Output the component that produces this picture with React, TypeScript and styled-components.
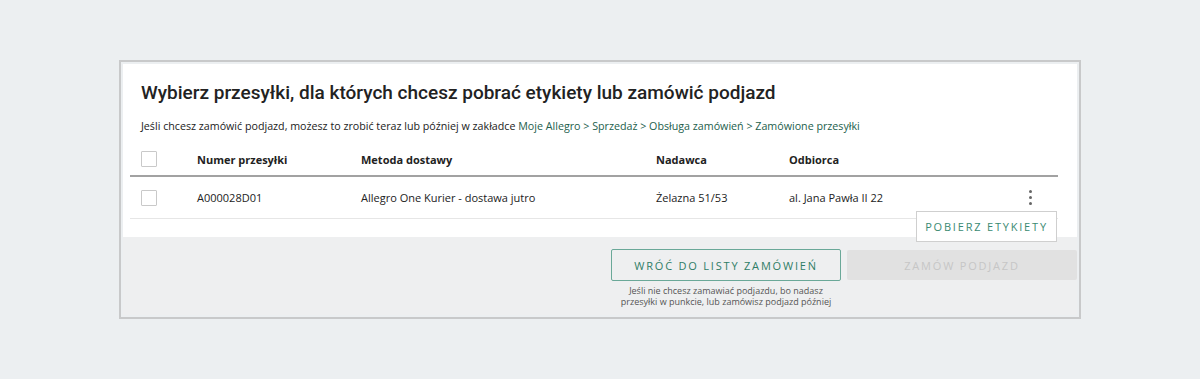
import styled, { createGlobalStyle } from "styled-components";

const GlobalStyle = createGlobalStyle`
  html, body {
    margin: 0;
    padding: 0;
    background: #eceff1;
  }
  * {
    box-sizing: border-box;
  }
`;

const Page = styled.div`
  width: 1200px;
  height: 379px;
  padding-top: 60px;
  background: #eceff1;
  font-family: "Open Sans", "Liberation Sans", sans-serif;
  color: #222;
`;

const Card = styled.div`
  width: 962px;
  margin-left: 119px;
  border: 2px solid #c8c9ca;
  padding: 2px;
  background: #eceff1;
`;

const Main = styled.div`
  background: #fff;
  padding: 17px 19px 18px 7px;
`;

const Title = styled.h2`
  margin: 0 0 0 11px;
  font-family: Roboto, "Liberation Sans", sans-serif;
  font-weight: 500;
  font-size: 19px;
  line-height: 24px;
  color: #222;
`;

const Info = styled.p`
  margin: 13px 0 0 11px;
  font-size: 10.7px;
  line-height: 16px;
  color: #222;
  & a {
    color: #23604c;
    text-decoration: none;
  }
`;

const Table = styled.div`
  margin-top: 9px;
`;

const Row = styled.div<{ $head?: boolean }>`
  display: grid;
  grid-template-columns: 56px 164px 295px 133px 1fr 48px;
  align-items: center;
  height: ${(p) => (p.$head ? "34px" : "42px")};
  border-bottom: ${(p) => (p.$head ? "2px solid #a2a2a2" : "1px solid #e6e6e6")};
  font-size: 11px;
  font-weight: ${(p) => (p.$head ? 700 : 400)};
  color: #222;
  position: relative;
`;

const Cell = styled.div`
  padding-left: 11px;
  white-space: nowrap;
`;

const Checkbox = styled.span`
  display: block;
  width: 16px;
  height: 16px;
  border: 1px solid #c9c9c9;
  border-radius: 1px;
  background: #fff;
`;

const Kebab = styled.div`
  position: relative;
  height: 100%;
  display: flex;
  align-items: center;
  padding-left: 19px;
`;

const Dots = styled.span`
  display: flex;
  flex-direction: column;
  gap: 3px;
  & i {
    display: block;
    width: 3px;
    height: 3px;
    border-radius: 50%;
    background: #666;
  }
`;

const Menu = styled.div`
  position: absolute;
  top: 34px;
  right: 1px;
  width: 141px;
  height: 31px;
  background: #fff;
  border: 1px solid #cfcfcf;
  display: flex;
  align-items: center;
  justify-content: center;
  font-size: 11px;
  font-weight: 500;
  letter-spacing: 1.8px;
  color: #3b8a72;
  z-index: 2;
  white-space: nowrap;
`;

const Footer = styled.div`
  background: #eeeff0;
  padding: 12px 0 8px 488px;
  display: flex;
  gap: 6px;
  align-items: flex-start;
`;

const Action = styled.div`
  width: 230px;
  display: flex;
  flex-direction: column;
  align-items: center;
`;

const Button = styled.button<{ $disabled?: boolean }>`
  width: 230px;
  height: ${(p) => (p.$disabled ? "30px" : "32px")};
  margin-top: ${(p) => (p.$disabled ? "1px" : "0")};
  border: ${(p) => (p.$disabled ? "none" : "1px solid #6aa898")};
  border-radius: 2px;
  background: ${(p) => (p.$disabled ? "#e1e1e1" : "#fff0")};
  color: ${(p) => (p.$disabled ? "#c6c6c6" : "#2f7d66")};
  font-family: "Open Sans", "Liberation Sans", sans-serif;
  font-size: 11px;
  font-weight: 500;
  letter-spacing: 1.8px;
  padding: 0;
  cursor: ${(p) => (p.$disabled ? "default" : "pointer")};
`;

const Hint = styled.p`
  margin: 4px 0 0;
  font-size: 9px;
  line-height: 11px;
  color: #555;
  text-align: center;
`;

const columns = ["Numer przesyłki", "Metoda dostawy", "Nadawca", "Odbiorca"];

const shipments = [
  {
    number: "A000028D01",
    method: "Allegro One Kurier - dostawa jutro",
    sender: "Żelazna 51/53",
    receiver: "al. Jana Pawła II 22",
  },
];

const App = () => {
  return (
    <Page>
      <GlobalStyle />
      <Card>
        <Main>
          <Title>Wybierz przesyłki, dla których chcesz pobrać etykiety lub zamówić podjazd</Title>
          <Info>
            Jeśli chcesz zamówić podjazd, możesz to zrobić teraz lub później w zakładce{" "}
            <a href="#">Moje Allegro &gt; Sprzedaż &gt; Obsługa zamówień &gt; Zamówione przesyłki</a>
          </Info>
          <Table>
            <Row $head>
              <Cell>
                <Checkbox />
              </Cell>
              {columns.map((c) => (
                <Cell key={c}>{c}</Cell>
              ))}
              <Cell />
            </Row>
            {shipments.map((s) => (
              <Row key={s.number}>
                <Cell>
                  <Checkbox />
                </Cell>
                <Cell>{s.number}</Cell>
                <Cell>{s.method}</Cell>
                <Cell>{s.sender}</Cell>
                <Cell>{s.receiver}</Cell>
                <Kebab>
                  <Dots>
                    <i />
                    <i />
                    <i />
                  </Dots>
                  <Menu>POBIERZ ETYKIETY</Menu>
                </Kebab>
              </Row>
            ))}
          </Table>
        </Main>
        <Footer>
          <Action>
            <Button>WRÓĆ DO LISTY ZAMÓWIEŃ</Button>
            <Hint>
              Jeśli nie chcesz zamawiać podjazdu, bo nadasz
              <br />
              przesyłki w punkcie, lub zamówisz podjazd później
            </Hint>
          </Action>
          <Button $disabled disabled>
            ZAMÓW PODJAZD
          </Button>
        </Footer>
      </Card>
    </Page>
  );
};

export default App;
